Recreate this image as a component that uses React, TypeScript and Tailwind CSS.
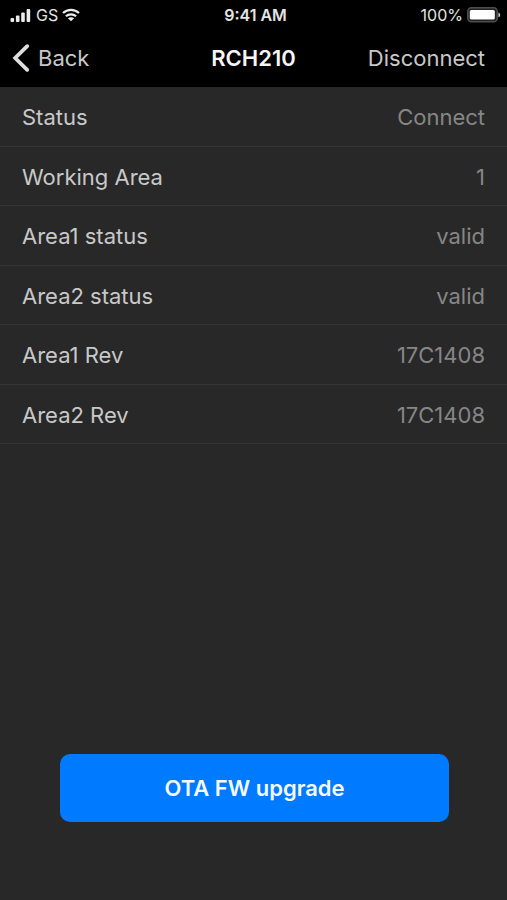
import React from "react";

type Detail = { label: string; value: string };

const details: Detail[] = [
  { label: "Status", value: "Connect" },
  { label: "Working Area", value: "1" },
  { label: "Area1 status", value: "valid" },
  { label: "Area2 status", value: "valid" },
  { label: "Area1 Rev", value: "17C1408" },
  { label: "Area2 Rev", value: "17C1408" },
];

function SignalIcon() {
  return (
    <svg className="h-4 w-[22px] shrink-0" viewBox="0 0 22 16" fill="#ececec" aria-hidden="true">
      <rect x="0.5" y="11" width="3.6" height="4" rx="1" />
      <rect x="5.9" y="8.6" width="3.6" height="6.4" rx="1" />
      <rect x="11.2" y="5.4" width="3.6" height="9.6" rx="1" />
      <rect x="16.6" y="2" width="3.6" height="13" rx="1" />
    </svg>
  );
}

function WifiIcon() {
  return (
    <svg className="h-3.5 w-[18px] shrink-0" viewBox="0 0 18 14" fill="none" stroke="#ececec" strokeWidth="2.2" aria-hidden="true">
      <path d="M1 5C5.5 0.7 12.5 0.7 17 5" />
      <path d="M3.9 8.3c2.9-2.7 7.3-2.7 10.2 0" />
      <path d="M9 13.3 5.9 10.3c1.8-1.5 4.4-1.5 6.2 0z" fill="#ececec" stroke="none" />
    </svg>
  );
}

function BatteryIcon() {
  return (
    <svg className="h-4 w-[34px] shrink-0" viewBox="0 0 34 16" aria-hidden="true">
      <rect x="0.8" y="0.8" width="29.4" height="14" rx="3.6" fill="#222" stroke="#4d4d4d" strokeWidth="1.6" />
      <rect x="2.8" y="3" width="25" height="9.6" rx="1.5" fill="#fff" />
      <path d="M31.4 5.4c2.4.9 2.4 4 0 4.9z" fill="#c8c8c8" />
    </svg>
  );
}

function StatusBar() {
  return (
    <div className="grid h-[30px] grid-cols-[1fr_auto_1fr] items-center pr-1.5 pl-2.5 text-[#e4e4e4]">
      <div className="flex items-center gap-1">
        <SignalIcon />
        <span className="text-base leading-5">GS</span>
        <WifiIcon />
      </div>
      <span className="text-base leading-5 font-semibold">9:41 AM</span>
      <div className="flex items-center justify-end gap-1">
        <span className="text-base leading-5">100%</span>
        <BatteryIcon />
      </div>
    </div>
  );
}

function NavBar() {
  return (
    <nav className="grid h-[57px] grid-cols-[1fr_auto_1fr] items-center px-[22px] pb-0.5 text-[22px] leading-7">
      <button type="button" className="-ml-2.5 flex items-center gap-2 justify-self-start text-[#c8c8c8]">
        <svg className="h-[30px] w-[18px]" viewBox="0 0 18 30" fill="none" stroke="#dedede" strokeWidth="3.8" strokeLinecap="round" strokeLinejoin="miter" aria-hidden="true">
          <path d="M15.2 3.2 3.2 15 15.2 26.8" />
        </svg>
        Back
      </button>
      <h1 className="font-semibold text-[#f5f5f5]">RCH210</h1>
      <button type="button" className="justify-self-end text-[#c8c8c8]">
        Disconnect
      </button>
    </nav>
  );
}

export default function App() {
  return (
    <div className="flex min-h-screen flex-col bg-[#282828] font-['Inter','Liberation_Sans',sans-serif]">
      <header className="bg-black">
        <StatusBar />
        <NavBar />
      </header>
      <main className="flex grow flex-col justify-between">
        <dl className="grid h-[357px] grid-rows-6 text-[22px] leading-7">
          {details.map((d) => (
            <div key={d.label} className="flex items-center justify-between border-b border-[#353535] px-[22px] pt-0.5">
              <dt className="text-[#c8c8c8]">{d.label}</dt>
              <dd className="text-[#868686]">{d.value}</dd>
            </div>
          ))}
        </dl>
        <div className="pr-[58px] pb-[78px] pl-[60px]">
          <button
            type="button"
            className="h-[68px] w-full rounded-[10px] bg-[#007aff] text-[22px] leading-7 font-semibold text-[#f4f9ff]"
          >
            OTA FW upgrade
          </button>
        </div>
      </main>
    </div>
  );
}
